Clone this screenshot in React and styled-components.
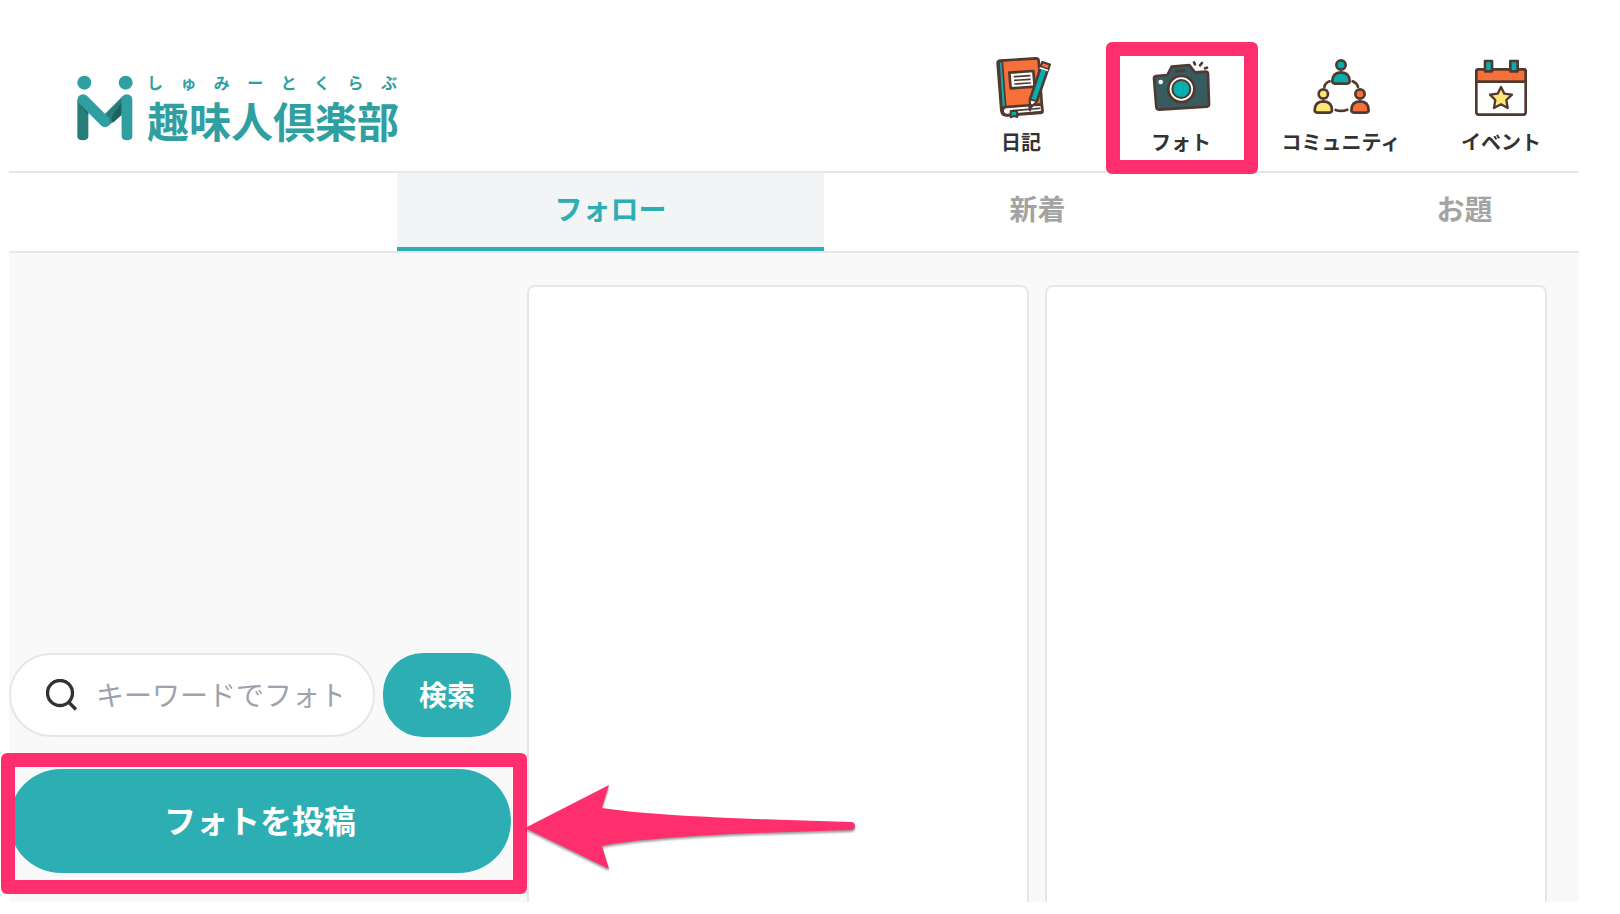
import React from "react";
import styled, { createGlobalStyle } from "styled-components";

const GlobalStyle = createGlobalStyle`
  * {
    box-sizing: border-box;
  }

  body {
    margin: 0;
    background: #ffffff;
    color: #333333;
    font-family: "Noto Sans CJK JP", "Liberation Sans", sans-serif;
  }
`;

const Page = styled.div`
  display: flex;
  flex-direction: column;
  min-height: calc(100vh - 12px);
  margin: 0 41px 12px 9px;
`;

const Header = styled.header`
  display: flex;
  align-items: flex-start;
  justify-content: space-between;
  padding: 56px 0 15px 68px;
  border-bottom: 2px solid #e5e7eb;
`;

const Logo = styled.a`
  display: flex;
  align-items: flex-start;
  gap: 14px;
  padding-top: 16px;
  color: #309fa1;
  text-decoration: none;
`;

const LogoMark = styled.svg`
  width: 56px;
  height: 66px;
  margin-top: 3px;
`;

const LogoText = styled.span`
  display: flex;
  flex-direction: column;
`;

const Ruby = styled.span`
  display: flex;
  justify-content: space-between;
  padding-right: 2px;
  font-size: 16px;
  font-weight: 700;
  line-height: 20px;
`;

const LogoName = styled.span`
  font-size: 42px;
  font-weight: 700;
  line-height: 56px;
`;

const Nav = styled.nav`
  display: flex;
  margin-right: -2px;
`;

const NavLink = styled.a`
  position: relative;
  display: flex;
  flex-direction: column;
  align-items: center;
  gap: 8px;
  width: 160px;
  color: #333333;
  font-size: 20px;
  font-weight: 700;
  line-height: 28px;
  text-decoration: none;
`;

const NavIcon = styled.svg`
  width: 60px;
  height: 64px;
  fill: none;
  stroke: #503a30;
  stroke-width: 8;
  stroke-linecap: round;
  stroke-linejoin: round;
`;

const Marker = styled.span`
  position: absolute;
  inset: ${({ $inset }) => $inset};
  border: 14px solid #ff2f6d;
  border-radius: 6px;
  pointer-events: none;
`;

const Arrow = styled.svg`
  position: absolute;
  top: 12px;
  left: calc(100% + 14px);
  width: 336px;
  height: 96px;
  fill: #ff2f6d;
  filter: drop-shadow(0 2px 1px rgba(0, 0, 0, 0.4));
  pointer-events: none;
`;

const Tabs = styled.nav`
  display: flex;
  overflow: hidden;
  padding-left: 388px;
  border-bottom: 2px solid #e5e7eb;
`;

const Tab = styled.a`
  flex: 0 0 427px;
  padding: 15px 0 19px;
  border-bottom: 4px solid ${({ $active }) => ($active ? "#2caeb3" : "transparent")};
  background: ${({ $active }) => ($active ? "#f2f4f6" : "transparent")};
  color: ${({ $active }) => ($active ? "#2caeb3" : "#a3a3a3")};
  font-size: 28px;
  font-weight: 700;
  line-height: 40px;
  text-align: center;
  text-decoration: none;
`;

const Main = styled.main`
  flex: 1;
  display: grid;
  grid-template-columns: repeat(3, minmax(0, 1fr));
  gap: 16px;
  padding: 32px 32px 0 0;
  background: #f9f9f9;
`;

const Sidebar = styled.aside`
  display: flex;
  flex-direction: column;
  justify-content: flex-end;
  gap: 32px;
  padding-bottom: 29px;
`;

const SearchForm = styled.form`
  display: flex;
  gap: 8px;
`;

const SearchField = styled.label`
  flex: 1;
  display: flex;
  align-items: center;
  gap: 18px;
  min-width: 0;
  height: 84px;
  padding: 0 32px 0 35px;
  border: 2px solid #e5e7eb;
  border-radius: 42px;
  background: #ffffff;
`;

const SearchIcon = styled.svg`
  flex: none;
  width: 32px;
  height: 32px;
  fill: none;
  stroke: #333333;
  stroke-width: 3.4;
`;

const SearchInput = styled.input`
  flex: 1;
  min-width: 0;
  padding: 0 0 2px;
  border: 0;
  outline: 0;
  background: transparent;
  color: #333333;
  font: inherit;
  font-size: 28px;
  line-height: 40px;

  &::placeholder {
    color: #9ca3af;
    opacity: 1;
  }
`;

const Button = styled.button`
  width: ${({ $wide }) => ($wide ? "100%" : "128px")};
  height: ${({ $wide }) => ($wide ? "104px" : "84px")};
  padding: 0 0 ${({ $wide }) => ($wide ? "4px" : "2px")};
  border: 0;
  border-radius: ${({ $wide }) => ($wide ? "52px" : "40px")};
  background: #2caeb3;
  color: #ffffff;
  font-family: inherit;
  font-size: ${({ $wide }) => ($wide ? "32px" : "28px")};
  font-weight: 700;
  cursor: pointer;
`;

const PostArea = styled.div`
  position: relative;
`;

const Card = styled.article`
  border: 2px solid #e5e7eb;
  border-bottom: 0;
  border-radius: 8px 8px 0 0;
  background: #ffffff;
`;

const DiaryIcon = () => (
  <NavIcon viewBox="33 48 180 192" aria-hidden="true">
    <path d="M60 62 168 55Q175 55 176 62L187 213Q187 218 181 219L80 226Q66 227 64 211L53 72Q52 63 60 62Z" fill="#f7703a" />
    <path d="M57 66 67 64 77 197 66 207Z" fill="#08adb0" strokeWidth="5" />
    <path d="M185 193 78 201Q67 203 68 214 69 225 82 225L187 216Z" fill="#ffffff" />
    <path d="M99 212 145 208M157 207 178 205" strokeWidth="5" />
    <path d="M92 213V232L102 228 112 231 111 212Z" fill="#08adb0" strokeWidth="6" />
    <path d="M88 98 160 93 164 140 92 145Z" fill="#ffffff" />
    <path d="M103 110 149 107M104 121 150 118M105 132 151 129" strokeWidth="5" />
    <path d="M187 67 209 74 171 183 150 202 150 178Z" fill="#08adb0" />
    <path d="M150 178 171 184 151 203Z" fill="#ffffff" strokeWidth="5" />
    <path d="M187 67 209 74 205 87 182 80Z" fill="#f7703a" strokeWidth="5" />
    <path d="M181 84 202 91" stroke="#ffffff" strokeWidth="5" />
    <path d="M149 199 155 196 150 210Z" fill="#503a30" />
  </NavIcon>
);

const PhotoIcon = () => (
  <NavIcon viewBox="513 48 180 192" aria-hidden="true">
    <path d="M528 108 562 105 575 80 628 75 645 97 677 95Q684 95 684 102L687 193Q687 199 681 200L538 209Q530 209 529 202L522 115Q522 109 528 108Z" fill="#385b60" />
    <path d="M588 94 612 92" />
    <circle cx="604" cy="147" r="39" fill="#ffffff" />
    <circle cx="604" cy="147" r="27" fill="#08adb0" strokeWidth="6" />
    <circle cx="542" cy="126" r="7" fill="#ffffff" stroke="none" />
    <path d="M642 67 645 73M666 69 660 76M681 83 675 85" />
  </NavIcon>
);

const Person = ({ x, y, color }) => (
  <g transform={`translate(${x} ${y})`} fill={color}>
    <circle cx="0" cy="0" r="14" />
    <path d="M-26 49Q-26 23 0 22 26 23 26 49 26 55 18 56H-18Q-26 55-26 49Z" />
  </g>
);

const CommunityIcon = () => (
  <NavIcon viewBox="123 48 180 192" aria-hidden="true">
    <path d="M163 141Q165 129 179 124M248 124Q261 130 264 141M197 210Q213 216 232 209" />
    <Person x={213} y={75} color="#08adb0" />
    <Person x={160} y={162} color="#ffe776" />
    <Person x={270} y={162} color="#f7703a" />
  </NavIcon>
);

const EventIcon = () => (
  <NavIcon viewBox="603 48 180 192" aria-hidden="true">
    <rect x="619" y="88" width="148" height="136" rx="7" fill="#ffffff" />
    <path d="M619 125V95Q619 88 626 88H760Q767 88 767 95V125Z" fill="#f7703a" />
    <path d="M645 63H666V94H645ZM721 63H743V94H721Z" fill="#08adb0" />
    <path d="M693 141 703 161 726 164 709 180 713 204 693 193 672 204 676 180 660 164 683 161Z" fill="#ffe776" strokeWidth="7" />
  </NavIcon>
);

const navItems = [
  { label: "日記", icon: DiaryIcon },
  { label: "フォト", icon: PhotoIcon, marked: true },
  { label: "コミュニティ", icon: CommunityIcon },
  { label: "イベント", icon: EventIcon },
];

const tabs = ["フォロー", "新着", "お題"];

const App = () => {
  return (
    <Page>
      <GlobalStyle />

      <Header>
        <Logo href="#">
          <LogoMark viewBox="51 44 168 198" aria-hidden="true">
            <path d="M52 118H85V228Q85 240 68 240 52 240 52 228Z" fill="#267d7a" />
            <path d="M52 124 85 164V140Z" fill="#1c625f" />
            <path d="M135 184 201 118" fill="none" stroke="#267d7a" strokeWidth="33" />
            <path d="M185 128V164L158 188Q152 176 160 160Z" fill="#1c625f" />
            <path d="M69 118 135 184" fill="none" stroke="#309fa1" strokeWidth="33" strokeLinecap="round" />
            <path d="M184 118A16 16 0 0 1 217 118V228Q217 240 201 240 185 240 185 228Z" fill="#309fa1" />
            <circle cx="73" cy="67" r="21" fill="#309fa1" />
            <circle cx="197" cy="67" r="21" fill="#309fa1" />
          </LogoMark>
          <LogoText>
            <Ruby>
              {[..."しゅみーとくらぶ"].map((char) => (
                <span key={char}>{char}</span>
              ))}
            </Ruby>
            <LogoName>趣味人倶楽部</LogoName>
          </LogoText>
        </Logo>

        <Nav>
          {navItems.map(({ label, icon: Icon, marked }) => (
            <NavLink key={label} href="#">
              <Icon />
              {label}
              {marked && <Marker $inset="-14px 3px -18px 5px" />}
            </NavLink>
          ))}
        </Nav>
      </Header>

      <Tabs>
        {tabs.map((tab, i) => (
          <Tab key={tab} href="#" $active={i === 0}>
            {tab}
          </Tab>
        ))}
      </Tabs>

      <Main>
        <Sidebar>
          <SearchForm onSubmit={(e) => e.preventDefault()}>
            <SearchField>
              <SearchIcon viewBox="0 0 32 32" aria-hidden="true">
                <circle cx="14" cy="14" r="12.5" />
                <path d="M22.5 23 30 30.5" />
              </SearchIcon>
              <SearchInput type="text" placeholder="キーワードでフォト" />
            </SearchField>
            <Button type="submit">検索</Button>
          </SearchForm>

          <PostArea>
            <Button type="button" $wide>
              フォトを投稿
            </Button>
            <Marker $inset="-16px -16px -21px -8px" />
            <Arrow viewBox="0 0 336 96" aria-hidden="true">
              <path d="M0 47 84 4 77 27C130 35 220 38 326 41A4 4 0 0 1 326 49C220 52 130 55 77 65L84 88Z" />
            </Arrow>
          </PostArea>
        </Sidebar>

        <Card />
        <Card />
      </Main>
    </Page>
  );
};

export default App;
